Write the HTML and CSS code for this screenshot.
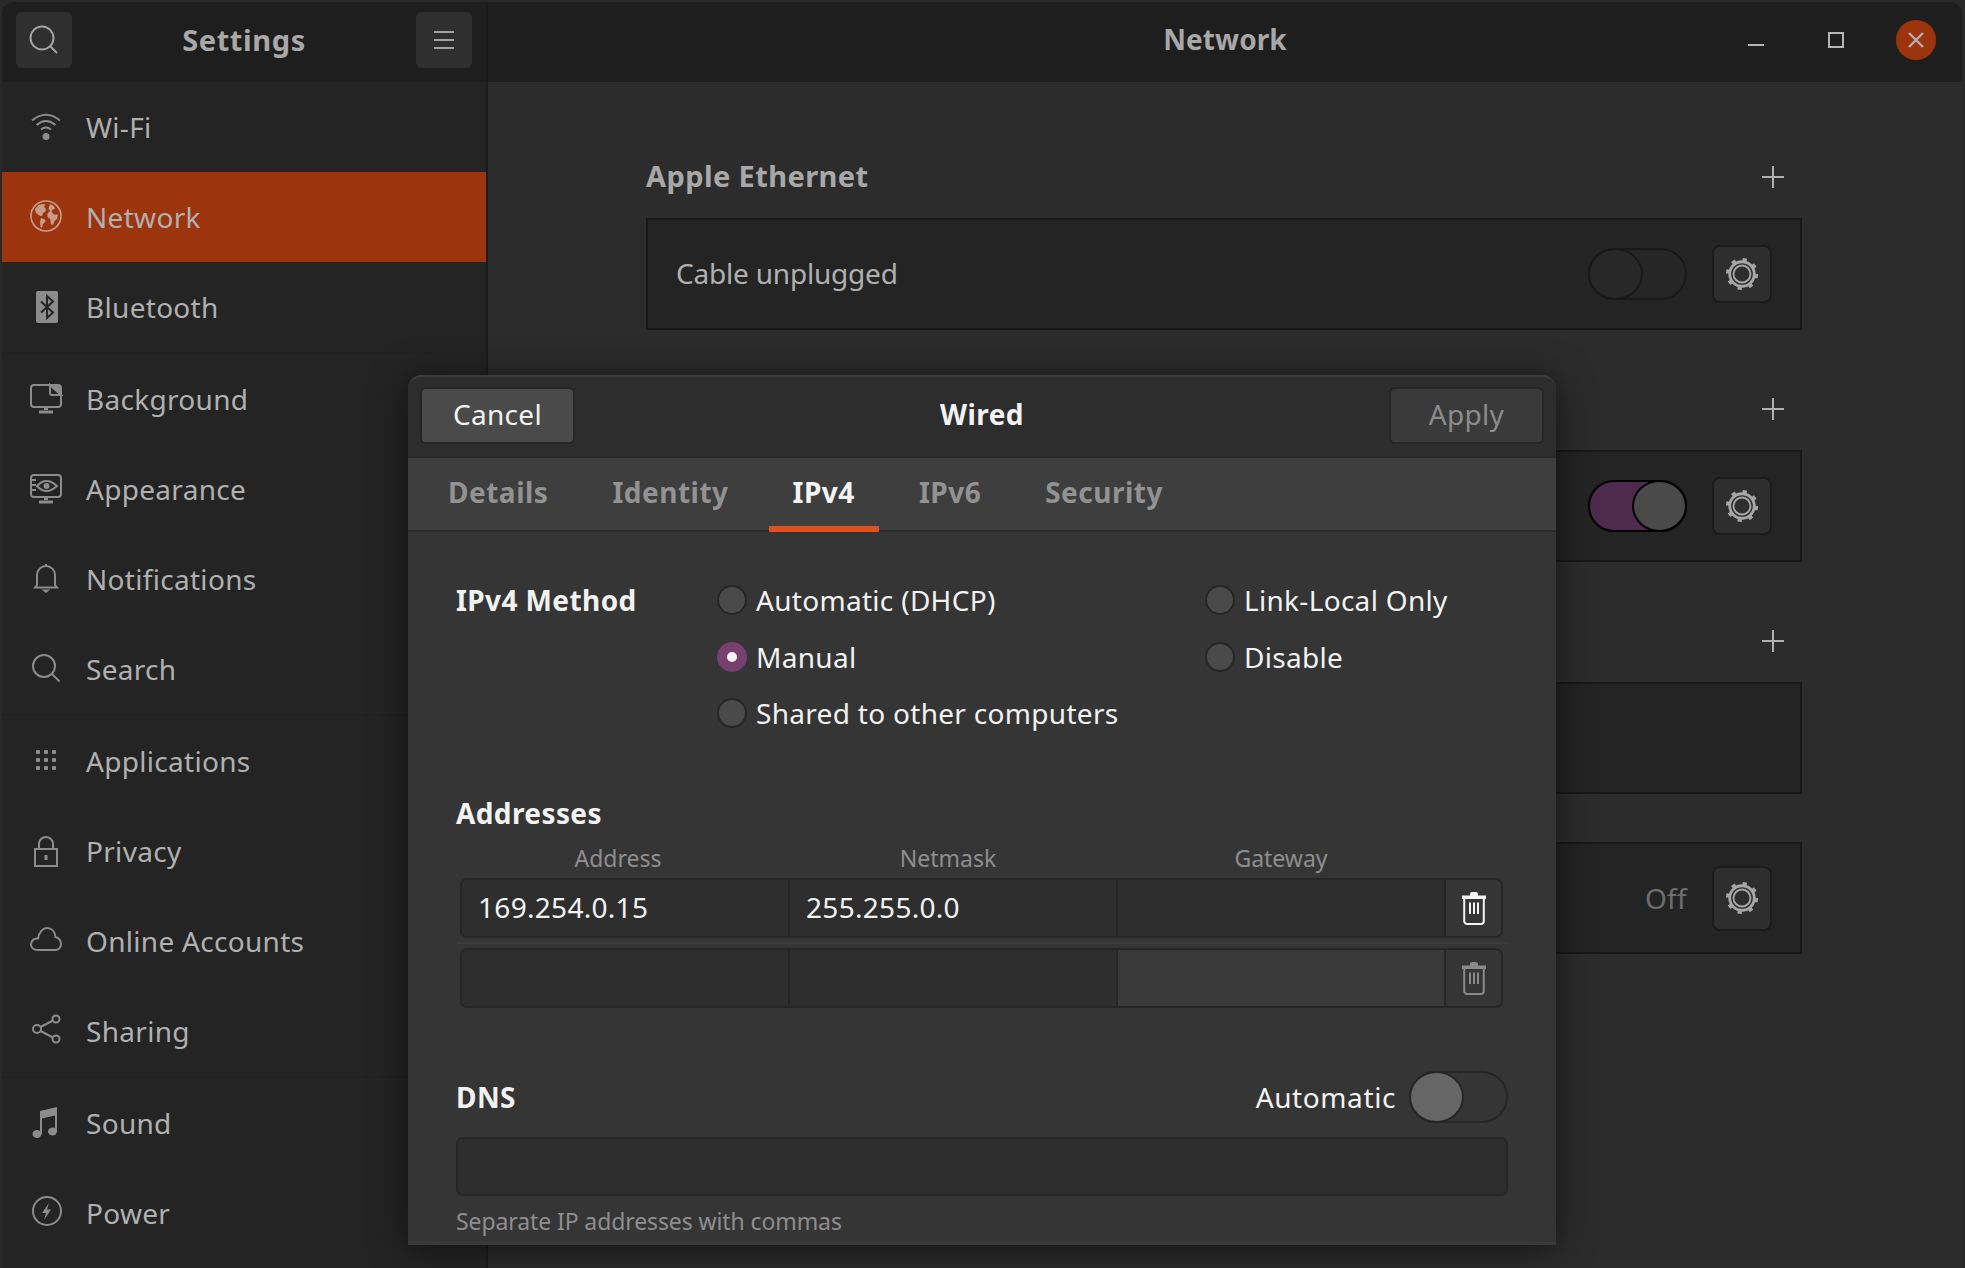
FILE: index.html
```html
<!DOCTYPE html>
<html lang="en">
<head>
    <meta charset="UTF-8">
    <title>Settings</title>
    <link rel="stylesheet" href="styles.css">
</head>
<body>
    <svg class="defs" width="0" height="0">
        <symbol id="gear" viewBox="0 0 36 36">
            <circle cx="18" cy="18" r="15.5" fill="none" stroke="currentColor" stroke-width="3" stroke-dasharray="4.5 7.7"/>
            <circle cx="18" cy="18" r="13" fill="none" stroke="currentColor" stroke-width="3"/>
            <circle cx="18" cy="18" r="9" fill="none" stroke="currentColor" stroke-width="2"/>
        </symbol>
        <symbol id="trash" viewBox="0 0 26 34">
            <path d="M9 4.500V3a2 2 0 0 1 2-2h4a2 2 0 0 1 2 2v1.500h8V8H1V4.500z" fill="currentColor"/>
            <path d="M3.200 8V30a3 3 0 0 0 3 3h13.600a3 3 0 0 0 3-3V8" fill="none" stroke="currentColor" stroke-width="2"/>
            <path d="M9 11.500V23M13 11.500V23M17 11.500V23" fill="none" stroke="currentColor" stroke-width="2"/>
        </symbol>
    </svg>

    <div class="window">
        <div class="titlebar">
            <div class="side-head">
                <div class="head-btn">
                    <svg width="32" height="32" viewBox="0 0 32 32" fill="none" stroke="currentColor" stroke-width="2"><circle cx="14" cy="14" r="11.500"/><path d="M22 22l7 7"/></svg>
                </div>
                <div class="head-title">Settings</div>
                <div class="head-btn">
                    <svg width="22" height="20" viewBox="0 0 22 20" fill="none" stroke="currentColor" stroke-width="2"><path d="M1 2h20M1 10h20M1 18h20"/></svg>
                </div>
            </div>
            <div class="main-head">
                <div class="main-title">Network</div>
                <div class="win-btns">
                    <div class="win-btn"><span class="win-min"></span></div>
                    <div class="win-btn"><span class="win-max"></span></div>
                    <div class="win-btn win-close">
                        <svg width="16" height="16" viewBox="0 0 16 16" fill="none" stroke="currentColor" stroke-width="2.200"><path d="M1 1l14 14M15 1L1 15"/></svg>
                    </div>
                </div>
            </div>
        </div>

        <div class="content">
            <div class="sidebar">
                <div class="group">
                    <div class="row">
                        <svg class="ico" viewBox="0 0 32 32" fill="none" stroke="currentColor" stroke-width="2"><path d="M2 9.500Q16-2 30 9.500M6.500 14Q16 6 25.500 14M11 18.500Q16 14.500 21 18.500"/><circle cx="16" cy="25.500" r="3.500" fill="currentColor" stroke="none"/></svg>
                        <span>Wi-Fi</span>
                    </div>
                    <div class="row active">
                        <svg class="ico" viewBox="0 0 32 32" fill="currentColor"><circle cx="16" cy="15" r="15" fill="none" stroke="currentColor" stroke-width="1.600"/><path d="M9 3.500L5 8l1 4 4 3 2 0 1-3 2.500-1.500.5-2.500-2-2 1.500-3z"/><path d="M11 17l4 1.500.5 2-2.500 2.500-1 4-1.500-1-.5-5z"/><path d="M20 3l4 2 1 3-2.500.5-1 2 2.500 3h4l-1 4.500-2.500 2-1.500 4-2-.5-1-5.500-2.500-2v-3.500l2.500-2.500-1.500-2.500z"/></svg>
                        <span>Network</span>
                    </div>
                    <div class="row">
                        <svg class="ico" viewBox="0 0 32 32"><rect x="6" y="0" width="22" height="32" rx="2" fill="currentColor"/><path d="M11 10.500l12 11-6 5.500V5l6 5.500-12 11" fill="none" stroke="#242424" stroke-width="2"/></svg>
                        <span>Bluetooth</span>
                    </div>
                </div>
                <div class="group">
                    <div class="row">
                        <svg class="ico" viewBox="0 0 32 32" fill="none" stroke="currentColor" stroke-width="2"><rect x="1" y="2" width="30" height="22" rx="3"/><path d="M20 2v8a2 2 0 0 0 2 2h9z"/><path d="M20 2l11 10V5a3 3 0 0 0-3-3z" fill="currentColor" stroke="none"/><path d="M14 24h4v3h-4zM9 27.500h14v3H9z" fill="currentColor" stroke="none"/></svg>
                        <span>Background</span>
                    </div>
                    <div class="row">
                        <svg class="ico" viewBox="0 0 32 32" fill="none" stroke="currentColor" stroke-width="2"><rect x="1" y="2" width="30" height="22" rx="3"/><path d="M7 13Q16 3 27 13 16 23 7 13z"/><circle cx="16.500" cy="13" r="3" fill="currentColor" stroke="none"/><path d="M1 7h5M1 12h5M1 17h5" stroke-width="2"/><path d="M14 24h4v3h-4zM9 27.500h14v3H9z" fill="currentColor" stroke="none"/></svg>
                        <span>Appearance</span>
                    </div>
                    <div class="row">
                        <svg class="ico" viewBox="0 0 32 32" fill="none" stroke="currentColor" stroke-width="2"><path d="M7 22V12a9 9 0 0 1 18 0v10l2 2.500H5z"/><path d="M16 1v2" /><path d="M11.500 26.500h9L16 30z" fill="currentColor" stroke="none"/></svg>
                        <span>Notifications</span>
                    </div>
                    <div class="row">
                        <svg class="ico" viewBox="0 0 32 32" fill="none" stroke="currentColor" stroke-width="2"><circle cx="14" cy="13" r="11"/><path d="M22 21l7.500 7.500"/></svg>
                        <span>Search</span>
                    </div>
                </div>
                <div class="group">
                    <div class="row">
                        <svg class="ico" viewBox="0 0 32 32" fill="currentColor"><rect x="6" y="5" width="4" height="4" rx="1"/><rect x="14" y="5" width="4" height="4" rx="1"/><rect x="22" y="5" width="4" height="4" rx="1"/><rect x="6" y="13" width="4" height="4" rx="1"/><rect x="14" y="13" width="4" height="4" rx="1"/><rect x="22" y="13" width="4" height="4" rx="1"/><rect x="6" y="21" width="4" height="4" rx="1"/><rect x="14" y="21" width="4" height="4" rx="1"/><rect x="22" y="21" width="4" height="4" rx="1"/></svg>
                        <span>Applications</span>
                    </div>
                    <div class="row">
                        <svg class="ico" viewBox="0 0 32 32" fill="none" stroke="currentColor" stroke-width="2"><rect x="5" y="14" width="22" height="17"/><path d="M9 14V9a7 7 0 0 1 14 0v5"/><rect x="14.500" y="20" width="3" height="5" fill="currentColor" stroke="none"/></svg>
                        <span>Privacy</span>
                    </div>
                    <div class="row">
                        <svg class="ico" viewBox="0 0 32 32" fill="none" stroke="currentColor" stroke-width="2"><path d="M8 25C3 25 1 22 1 19.500 1 15 5 13 8 13.500 9 7 13 3 17 3c5 0 8 4 8.500 9 3.500.5 5.500 4 5.500 7 0 3-2 6-6 6z"/></svg>
                        <span>Online Accounts</span>
                    </div>
                    <div class="row">
                        <svg class="ico" viewBox="0 0 32 32" fill="none" stroke="currentColor" stroke-width="2"><circle cx="26" cy="4" r="3.500"/><circle cx="7" cy="14" r="4"/><circle cx="26" cy="24" r="3.500"/><path d="M10.500 12l12.500-6.500M10.500 16L23 22.500"/></svg>
                        <span>Sharing</span>
                    </div>
                </div>
                <div class="group">
                    <div class="row">
                        <svg class="ico" viewBox="0 0 32 32" fill="currentColor"><ellipse cx="7" cy="27" rx="4.500" ry="4"/><ellipse cx="22.500" cy="24.500" rx="4.500" ry="4"/><path d="M10 27V4L27 0v24.500h-2V8.500L12 11.500V27z"/></svg>
                        <span>Sound</span>
                    </div>
                    <div class="row">
                        <svg class="ico" viewBox="0 0 32 32"><circle cx="17" cy="14" r="14" fill="none" stroke="currentColor" stroke-width="2"/><path d="M19 6l-7 10h4l-2 7 7-10.500h-4z" fill="currentColor"/></svg>
                        <span>Power</span>
                    </div>
                </div>
            </div>

            <div class="panel">
                <div class="section">
                    <div class="section-head"><span class="section-title">Apple Ethernet</span>
                        <svg class="plus" width="22" height="22" viewBox="0 0 22 22" stroke="currentColor" stroke-width="2"><path d="M11 0v22M0 11h22"/></svg>
                    </div>
                    <div class="card">
                        <span class="card-label">Cable unplugged</span>
                        <div class="toggle"><div class="knob"></div></div>
                        <div class="gear-btn"><svg width="34" height="34"><use href="#gear"/></svg></div>
                    </div>
                </div>
                <div class="section">
                    <div class="section-head"><span class="section-title"></span>
                        <svg class="plus" width="22" height="22" viewBox="0 0 22 22" stroke="currentColor" stroke-width="2"><path d="M11 0v22M0 11h22"/></svg>
                    </div>
                    <div class="card">
                        <span class="card-label"></span>
                        <div class="toggle toggle-on"><div class="knob"></div></div>
                        <div class="gear-btn"><svg width="34" height="34"><use href="#gear"/></svg></div>
                    </div>
                </div>
                <div class="section">
                    <div class="section-head"><span class="section-title"></span>
                        <svg class="plus" width="22" height="22" viewBox="0 0 22 22" stroke="currentColor" stroke-width="2"><path d="M11 0v22M0 11h22"/></svg>
                    </div>
                    <div class="card"></div>
                </div>
                <div class="section section-last">
                    <div class="card">
                        <span class="card-label"></span>
                        <span class="card-off">Off</span>
                        <div class="gear-btn gear-tall"><svg width="34" height="34"><use href="#gear"/></svg></div>
                    </div>
                </div>
            </div>
        </div>
    </div>

    <!-- Wired dialog -->
    <div class="dialog">
        <div class="dlg-head">
            <div class="dlg-btn dlg-cancel">Cancel</div>
            <div class="dlg-title">Wired</div>
            <div class="dlg-btn dlg-apply">Apply</div>
        </div>
        <div class="tabs">
            <div class="tab">Details</div>
            <div class="tab">Identity</div>
            <div class="tab tab-active">IPv4</div>
            <div class="tab">IPv6</div>
            <div class="tab">Security</div>
        </div>
        <div class="dlg-body">
            <div class="method">
                <div class="strong">IPv4 Method</div>
                <div class="radio"><span class="dot"></span>Automatic (DHCP)</div>
                <div class="radio"><span class="dot"></span>Link-Local Only</div>
                <div class="radio radio-2"><span class="dot dot-on"></span>Manual</div>
                <div class="radio"><span class="dot"></span>Disable</div>
                <div class="radio radio-2"><span class="dot"></span>Shared to other computers</div>
            </div>

            <div class="strong addr-title">Addresses</div>
            <div class="addr-labels">
                <span>Address</span>
                <span>Netmask</span>
                <span>Gateway</span>
            </div>
            <div class="addr-row">
                <div class="cell">169.254.0.15</div>
                <div class="cell">255.255.0.0</div>
                <div class="cell"></div>
                <div class="del"><svg width="26" height="34"><use href="#trash"/></svg></div>
            </div>
            <div class="addr-sep"></div>
            <div class="addr-row">
                <div class="cell"></div>
                <div class="cell"></div>
                <div class="cell cell-off"></div>
                <div class="del del-off"><svg width="26" height="34"><use href="#trash"/></svg></div>
            </div>

            <div class="dns-row">
                <div class="strong">DNS</div>
                <div class="dns-auto">
                    <span>Automatic</span>
                    <div class="toggle toggle-dns"><div class="knob"></div></div>
                </div>
            </div>
            <div class="dns-input"></div>
            <div class="help">Separate IP addresses with commas</div>
        </div>
    </div>
</body>
</html>
```

FILE: styles.css
```css
* {
    box-sizing: border-box;
}
html, body {
    margin: 0;
    height: 100%;
    overflow: hidden;
}
body {
    background: #292929;
    padding: 2px 3px 0 2px;
    font-family: "Noto Sans", sans-serif;
    font-size: 28px;
    letter-spacing: .3px;
    color: #b0b0b0;
}
.defs {
    position: absolute;
}

/* main window */
.window {
    height: 100%;
    display: flex;
    flex-direction: column;
    border-radius: 12px 12px 0 0;
    overflow: hidden;
    background: #2c2c2c;
}
.titlebar {
    height: 80px;
    flex: none;
    display: flex;
    background: #1e1e1e;
}
.side-head {
    width: 486px;
    flex: none;
    display: flex;
    align-items: center;
    justify-content: space-between;
    padding: 0 14px 4px;
    border-right: 2px solid #191919;
}
.head-btn {
    width: 56px;
    height: 56px;
    border-radius: 6px;
    background: #2f2f2f;
    color: #a4a4a4;
    display: flex;
    align-items: center;
    justify-content: center;
}
.head-title, .main-title {
    font-weight: 700;
    color: #a8a8a8;
    padding-bottom: 2px;
}
.head-title {
    font-size: 29px;
    letter-spacing: .6px;
}
.main-title {
    letter-spacing: .1px;
}
.main-head {
    flex: 1;
    position: relative;
    display: flex;
    align-items: center;
    justify-content: center;
    padding-bottom: 4px;
}
.win-btns {
    position: absolute;
    right: 26px;
    top: 18px;
    display: flex;
    gap: 40px;
}
.win-btn {
    width: 40px;
    height: 40px;
    display: flex;
    align-items: center;
    justify-content: center;
    color: #b4b4b4;
}
.win-min {
    width: 16px;
    height: 2px;
    margin-top: 10px;
    background: #b4b4b4;
}
.win-max {
    width: 16px;
    height: 16px;
    border: 2px solid #b4b4b4;
}
.win-close {
    background: #9c340e;
    border-radius: 50%;
}
.content {
    flex: 1;
    display: flex;
    min-height: 0;
}

/* sidebar */
.sidebar {
    width: 486px;
    flex: none;
    background: #242424;
    border-right: 2px solid #1b1b1b;
}
.group {
    border-bottom: 2px solid #222;
}
.group:last-child {
    border-bottom: 0;
}
.row {
    height: 90px;
    display: flex;
    align-items: center;
    gap: 24px;
    padding-left: 28px;
}
.row.active {
    background: #9c340e;
}
.ico {
    width: 32px;
    height: 32px;
    flex: none;
    color: #8c8c8c;
    overflow: visible;
}
.active .ico {
    color: #c89c8a;
}

/* network panel */
.panel {
    flex: 1;
    padding: 54px 160px 0 158px;
}
.section {
    margin-bottom: 38px;
}
.section-last {
    margin-top: 48px;
}
.section-head {
    height: 82px;
    display: flex;
    align-items: center;
    justify-content: space-between;
    padding-right: 18px;
}
.section-title {
    font-weight: 700;
    font-size: 29px;
    letter-spacing: .4px;
    color: #a8a8a8;
    padding-bottom: 4px;
}
.plus {
    color: #b0b0b0;
}
.card {
    height: 112px;
    display: flex;
    align-items: center;
    gap: 25px;
    padding: 0 28px;
    background: #242424;
    border: 2px solid #181818;
}
.card-label {
    flex: 1;
    padding-bottom: 2px;
    letter-spacing: -.2px;
}
.card-off {
    color: #6e6e6e;
}
.gear-btn {
    width: 60px;
    height: 58px;
    display: flex;
    align-items: center;
    justify-content: center;
    background: #2e2e2e;
    border: 2px solid #1c1c1c;
    border-radius: 8px;
    color: #a8a8a8;
}
.gear-tall {
    height: 65px;
}
.toggle {
    width: 99px;
    height: 52px;
    display: flex;
    border-radius: 26px;
    background: #262626;
    border: 2px solid #191919;
}
.knob {
    width: 51px;
    height: 48px;
    border-radius: 50%;
    background: #282828;
    box-shadow: 0 0 0 2px #191919;
}
.toggle-on {
    justify-content: flex-end;
    background: #4e2a4f;
    border-color: #000;
}
.toggle-on .knob {
    background: #4a4a4a;
    box-shadow: 0 0 0 2px #000;
}

/* Wired dialog, on top of the window */
.dialog {
    position: absolute;
    left: 408px;
    top: 375px;
    width: 1148px;
    height: 870px;
    display: flex;
    flex-direction: column;
    background: #353535;
    border-radius: 14px 14px 0 0;
    border-bottom: 3px solid #3a3a3a;
    box-shadow: 0 4px 36px rgba(0, 0, 0, .55);
    color: #f2f2f2;
}
.dlg-head {
    height: 81px;
    flex: none;
    display: flex;
    align-items: center;
    justify-content: space-between;
    padding: 0 12px 3px;
    background: #2d2d2d;
    border-top: 2px solid #3c3c3c;
    border-radius: 14px 14px 0 0;
}
.dlg-btn {
    width: 155px;
    height: 57px;
    display: flex;
    align-items: center;
    justify-content: center;
    border-radius: 6px;
    border: 2px solid #262626;
    padding-bottom: 2px;
}
.dlg-cancel {
    background: #4a4a4a;
    color: #f2f2f2;
}
.dlg-apply {
    background: #3a3a3a;
    color: #8c8c8c;
}
.dlg-title {
    font-weight: 700;
    letter-spacing: .4px;
    padding-bottom: 2px;
}
.tabs {
    height: 76px;
    flex: none;
    display: flex;
    gap: 16px;
    padding-left: 16px;
    background: #3e3e3e;
    border-top: 2px solid #2a2a2a;
    border-bottom: 2px solid #2a2a2a;
}
.tab {
    padding: 0 24px;
    display: flex;
    align-items: center;
    font-weight: 700;
    letter-spacing: .5px;
    color: #929292;
    margin-bottom: -2px;
    border-bottom: 6px solid transparent;
}
.tab-active {
    color: #f4f4f4;
    border-bottom-color: #e2501c;
}
.dlg-body {
    flex: 1;
    padding: 40px 48px 0;
}
.strong {
    font-weight: 700;
    letter-spacing: .4px;
}
.method {
    display: grid;
    grid-template-columns: 261px 488px auto;
    grid-auto-rows: 56.500px;
    align-items: center;
}
.radio {
    display: flex;
    align-items: center;
    gap: 9px;
}
.radio-2 {
    grid-column: 2;
}
.dot {
    width: 30px;
    height: 30px;
    flex: none;
    border-radius: 50%;
    background: #4a4a4a;
    border: 2px solid #262626;
}
.dot-on {
    background: #77406f;
    border-color: #77406f;
    position: relative;
}
.dot-on::after {
    content: "";
    position: absolute;
    left: 8px;
    top: 8px;
    width: 10px;
    height: 10px;
    border-radius: 50%;
    background: #f4f4f4;
}
.addr-title {
    margin-top: 51px;
    height: 40px;
    display: flex;
    align-items: center;
}
.addr-labels {
    margin: 7px 0 0 5px;
    height: 38px;
    display: grid;
    grid-template-columns: 314px 346px 320px;
    text-align: center;
    font-size: 23px;
    letter-spacing: 0;
    line-height: 36px;
    color: #8e8e8e;
}
.addr-row {
    margin-left: 4px;
    width: 1043px;
    height: 60px;
    display: grid;
    grid-template-columns: 328px 328px 328px 1fr;
    border: 2px solid #262626;
    border-radius: 7px;
    overflow: hidden;
}
.cell {
    background: #2e2e2e;
    border-right: 2px solid #262626;
    padding-left: 16px;
    line-height: 54px;
}
.cell-off {
    background: #3a3a3a;
}
.del {
    display: flex;
    align-items: center;
    justify-content: center;
    color: #f4f4f4;
}
.del-off {
    color: #8a8a8a;
}
.addr-sep {
    height: 2px;
    margin: 4px 0 4px 1px;
    background: #3c3c3c;
}
.dns-row {
    margin-top: 64px;
    height: 51px;
    display: flex;
    align-items: center;
    justify-content: space-between;
}
.dns-auto {
    display: flex;
    align-items: center;
    gap: 13px;
    letter-spacing: .6px;
}
.toggle-dns {
    background: #353535;
    border-color: #262626;
}
.toggle-dns .knob {
    background: #666;
    box-shadow: 0 0 0 2px #262626;
}
.dns-input {
    margin-top: 14px;
    height: 59px;
    background: #2e2e2e;
    border: 2px solid #262626;
    border-radius: 7px;
}
.help {
    margin-top: 10px;
    font-size: 23px;
    letter-spacing: -.1px;
    line-height: 30px;
    color: #8e8e8e;
}
```
